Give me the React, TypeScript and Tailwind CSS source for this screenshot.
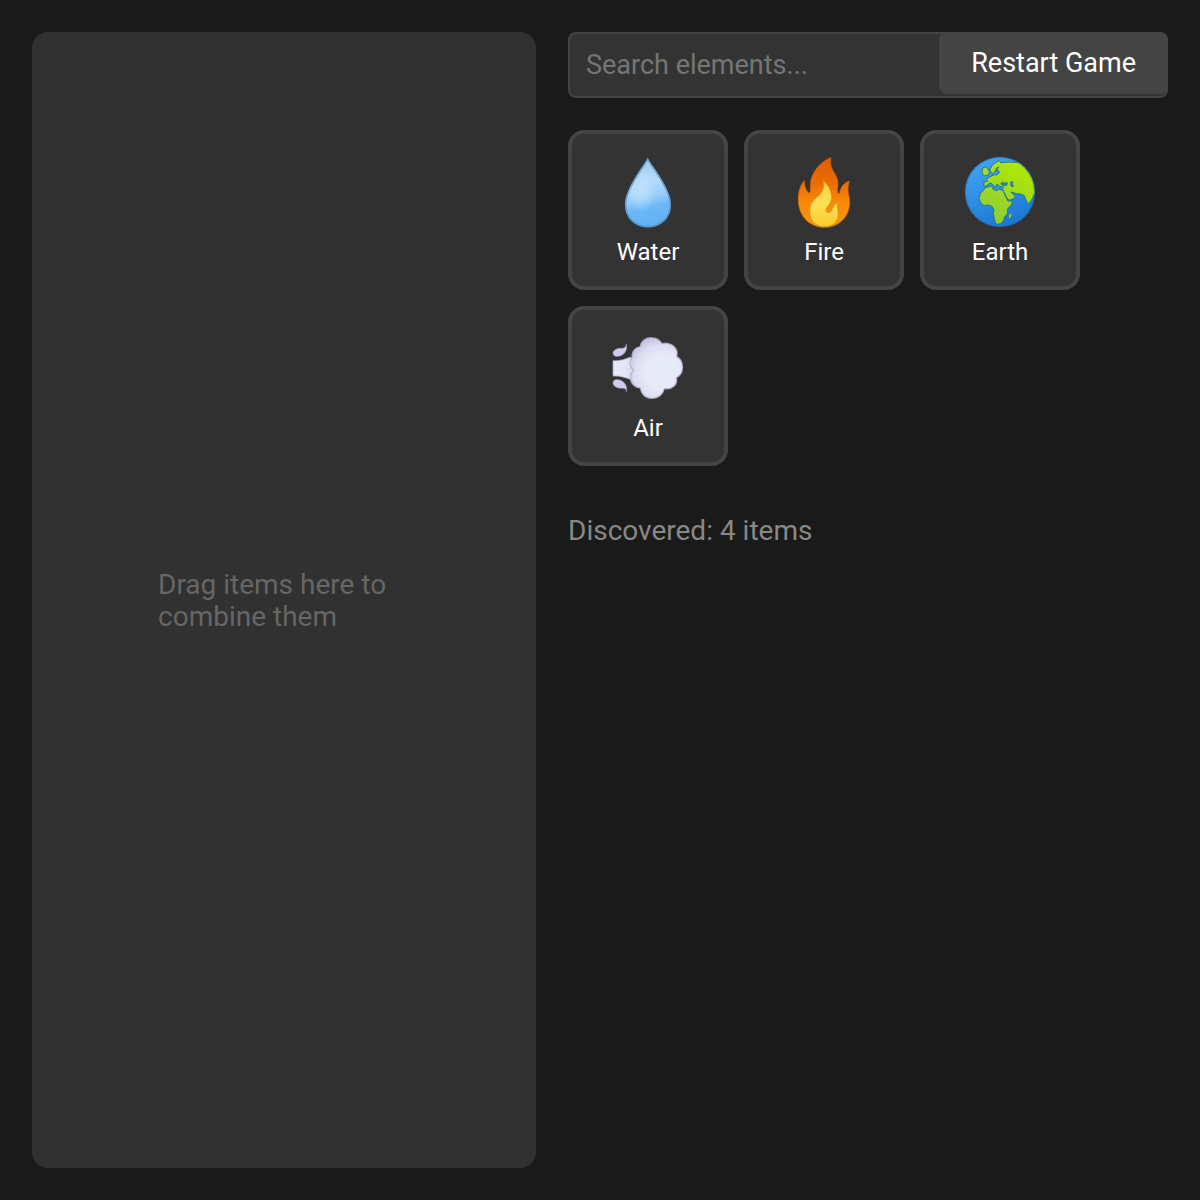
import { useState, type ReactNode } from "react";

function WaterIcon() {
  return (
    <svg viewBox="12 30 216 216" className="size-18" aria-hidden="true">
      <defs>
        <linearGradient id="water-body" x1="0.4" y1="0" x2="0.56" y2="1">
          <stop offset="0.1" stopColor="#a3d1f7" />
          <stop offset="0.35" stopColor="#b2dbfc" />
          <stop offset="0.55" stopColor="#9ccffa" />
          <stop offset="0.72" stopColor="#6cb8f7" />
          <stop offset="1" stopColor="#60b0f4" />
        </linearGradient>
        <radialGradient id="water-shine" cx="0.36" cy="0.46" r="0.32">
          <stop offset="0" stopColor="#c6e5fd" stopOpacity="0.7" />
          <stop offset="1" stopColor="#c6e5fd" stopOpacity="0" />
        </radialGradient>
      </defs>
      <path
        d="M119 36C108 58 51 128 51 176c0 41 31 68 69 68s69-27 69-68c0-48-59-118-70-140Z"
        fill="url(#water-body)"
      />
      <path
        d="M119 36C108 58 51 128 51 176c0 41 31 68 69 68s69-27 69-68c0-48-59-118-70-140Z"
        fill="url(#water-shine)"
      />
      <path
        d="M119 40C108 61 53 129 53 176c0 40 30 66 67 66s67-26 67-66c0-47-57-115-68-136Z"
        fill="none"
        stroke="#5083b4"
        strokeOpacity="0.6"
        strokeWidth="5"
      />
    </svg>
  );
}

function FireIcon() {
  return (
    <svg viewBox="12 30 216 216" className="size-18" aria-hidden="true">
      <defs>
        <linearGradient id="fire-outer" x1="0" y1="0" x2="0" y2="1">
          <stop offset="0" stopColor="#e05e02" />
          <stop offset="0.35" stopColor="#eb6a02" />
          <stop offset="0.65" stopColor="#fa8a08" />
          <stop offset="1" stopColor="#f8940c" />
        </linearGradient>
        <linearGradient id="fire-inner" x1="0" y1="0" x2="0" y2="1">
          <stop offset="0" stopColor="#f8cf3e" />
          <stop offset="0.5" stopColor="#fde058" />
          <stop offset="1" stopColor="#fccb2c" />
        </linearGradient>
      </defs>
      <path
        d="M141 35c-26 9-63 41-62 87 0 9 1 17-3 19-9-4-15-20-15-37-12 12-20 36-18 61 2 49 36 79 78 79 44 0 76-31 76-75 0-25-10-31-1-64-16 5-27 20-29 35-1 6-5 4-6-3-2-10 3-19 0-34-4-21-28-38-20-68Z"
        fill="url(#fire-outer)"
        stroke="#ca6208"
        strokeOpacity="0.7"
        strokeWidth="3"
        strokeLinejoin="round"
      />
      <path
        d="M118 105c4 24-4 37-20 49-17 13-22 28-21 46 2 28 21 42 45 42 25 0 41-15 41-38 0-14-5-22-2-35-10 5-14 15-20 26-6 7-15 6-15-2 0-12 18-18 17-40-1-23-13-39-25-48Z"
        fill="url(#fire-inner)"
        stroke="#cf9a16"
        strokeOpacity="0.7"
        strokeWidth="4"
        strokeLinejoin="round"
      />
    </svg>
  );
}

function EarthIcon() {
  return (
    <svg viewBox="12 18 216 216" className="size-18" aria-hidden="true">
      <defs>
        <linearGradient id="earth-sea" x1="0.2" y1="0" x2="0.6" y2="1">
          <stop offset="0" stopColor="#45a4f3" />
          <stop offset="0.5" stopColor="#2f8fe6" />
          <stop offset="1" stopColor="#1b76d2" />
        </linearGradient>
        <linearGradient
          id="earth-land"
          gradientUnits="userSpaceOnUse"
          x1="180"
          y1="40"
          x2="90"
          y2="210"
        >
          <stop offset="0" stopColor="#aeea00" />
          <stop offset="0.5" stopColor="#a0da1c" />
          <stop offset="1" stopColor="#8fcc3c" />
        </linearGradient>
        <clipPath id="earth-disc">
          <circle cx="120" cy="126" r="104" />
        </clipPath>
      </defs>
      <circle cx="120" cy="126" r="105" fill="url(#earth-sea)" />
      <g
        clipPath="url(#earth-disc)"
        fill="url(#earth-land)"
        stroke="#237995"
        strokeWidth="3"
        strokeLinejoin="round"
      >
        <path d="M91 55L98 44L110 36L117 32L122 38L150 36L180 38L232 70L236 120L222 134L217 146L206 162L200 154L192 136L182 132L170 131L161 128L153 126L160 134L167 138L160 146L147 151L139 141L131 125L128 118L130 112L119 109L114 104L109 104L107 111L103 110L98 103L92 99L85 102L80 108L71 108L72 96L82 94L80 87L87 82L96 77L104 74L110 75L118 69L117 63L110 62L116 50L109 55L104 66L99 71L94 67L90 61Z" />
        <path d="M76 113L92 109L98 111L99 118L110 122L116 118L129 121L135 136L144 153L158 153L154 164L142 178L142 192L133 202L131 211L122 221L108 223L103 207L100 192L102 180L96 169L84 165L72 167L62 158L57 146L61 130L69 123Z" />
        <path d="M66 66L68 54L76 51L84 56L88 66L85 75L74 77L67 73Z" />
        <path d="M146 194L154 187L156 194L151 207L146 207Z" />
      </g>
      <g fill="#247fb4" stroke="#217894" strokeWidth="2">
        <path d="M122 102L127 96L133 99L142 98L141 106L130 108Z" />
        <path d="M152 95L160 96L157 101L161 108L156 111L152 106Z" />
      </g>
      <circle
        cx="120"
        cy="126"
        r="103"
        fill="none"
        stroke="#216ca9"
        strokeOpacity="0.4"
        strokeWidth="4"
      />
    </svg>
  );
}

function AirIcon() {
  return (
    <svg viewBox="24 18 216 216" className="size-18" aria-hidden="true">
      <defs>
        <radialGradient
          id="air-cloud"
          gradientUnits="userSpaceOnUse"
          cx="175"
          cy="140"
          r="115"
        >
          <stop offset="0.45" stopColor="#e7eaf7" />
          <stop offset="0.72" stopColor="#dcdef2" />
          <stop offset="1" stopColor="#c0bce0" />
        </radialGradient>
        <linearGradient id="air-stream" x1="0" y1="0" x2="1" y2="0">
          <stop offset="0" stopColor="#e9eaf8" />
          <stop offset="0.6" stopColor="#e2e4f5" />
          <stop offset="1" stopColor="#ccc9e8" />
        </linearGradient>
      </defs>
      <path
        d="M27 104c20 1 36-4 52-11l16 30-17 37c-16-6-32-11-51-10Z"
        fill="url(#air-stream)"
        stroke="#aaa5bd"
        strokeOpacity="0.7"
        strokeWidth="3"
      />
      <path
        d="M109 62c1-17 17-28 34-27 15 0 25 9 31 18 20-5 42 6 45 25 1 6 0 10-1 14 22 10 25 51-1 63 5 21-12 37-36 33-5 18-18 29-37 29-20 0-33-13-35-31-19-1-32-18-29-35 1-8 4-13 9-18-13-11-14-28-5-39-1-19 11-30 25-32Z"
        fill="url(#air-cloud)"
        stroke="#b8b3ce"
        strokeOpacity="0.8"
        strokeWidth="4"
        strokeLinejoin="round"
      />
      <g fill="#cfcbea" stroke="#938ab5" strokeOpacity="0.6" strokeWidth="3">
        <path d="M67 54c-2 12-9 13-18 13-13 0-22 7-22 15 0 8 9 11 17 9 15-2 28-17 23-37Z" />
        <path d="M67 198c-1-13-8-10-18-11-14-2-22-8-22-17 0-8 9-11 17-9 15 2 28 18 23 37Z" />
      </g>
    </svg>
  );
}

type Element = { name: string; icon: ReactNode };

const elements: Element[] = [
  { name: "Water", icon: <WaterIcon /> },
  { name: "Fire", icon: <FireIcon /> },
  { name: "Earth", icon: <EarthIcon /> },
  { name: "Air", icon: <AirIcon /> },
];

function ElementCard({ name, icon }: Element) {
  return (
    <button
      type="button"
      draggable
      className="flex size-40 cursor-grab flex-col items-center justify-start gap-2 rounded-2xl border-4 border-[#444444] bg-[#333333] pt-[22px] text-2xl leading-8 text-white"
    >
      {icon}
      <span>{name}</span>
    </button>
  );
}

export default function App() {
  const [query, setQuery] = useState("");
  const visible = elements.filter((element) =>
    element.name.toLowerCase().includes(query.trim().toLowerCase()),
  );

  return (
    <div className="grid min-h-screen grid-cols-[minmax(0,21fr)_minmax(0,25fr)] gap-8 bg-[#1a1a1a] p-8 font-['Roboto',sans-serif] text-white">
      <main className="flex items-center justify-center rounded-2xl bg-[#313131]">
        <p className="w-1/2 pt-0.5 text-[28px] leading-8 text-[#666666]">
          Drag items here to combine them
        </p>
      </main>

      <aside className="flex flex-col">
        <div className="relative mb-8">
          <input
            type="text"
            aria-label="Search elements"
            placeholder="Search elements..."
            value={query}
            onChange={(event) => setQuery(event.target.value)}
            className="block w-full rounded-lg border-2 border-[#444444] bg-[#333333] px-4 py-3.5 text-[27px] leading-[34px] text-white outline-none placeholder:text-[#757575]"
          />
          <button
            type="button"
            onClick={() => setQuery("")}
            className="absolute top-0 right-0 rounded-lg bg-[#444444] px-8 py-4 text-[27px] leading-[30px] text-white"
          >
            Restart Game
          </button>
        </div>

        <div className="flex flex-wrap gap-4">
          {visible.map((element) => (
            <ElementCard key={element.name} {...element} />
          ))}
        </div>

        <p className="mt-12 text-[28px] leading-[34px] text-[#888888]">
          Discovered: {elements.length} items
        </p>
      </aside>
    </div>
  );
}
